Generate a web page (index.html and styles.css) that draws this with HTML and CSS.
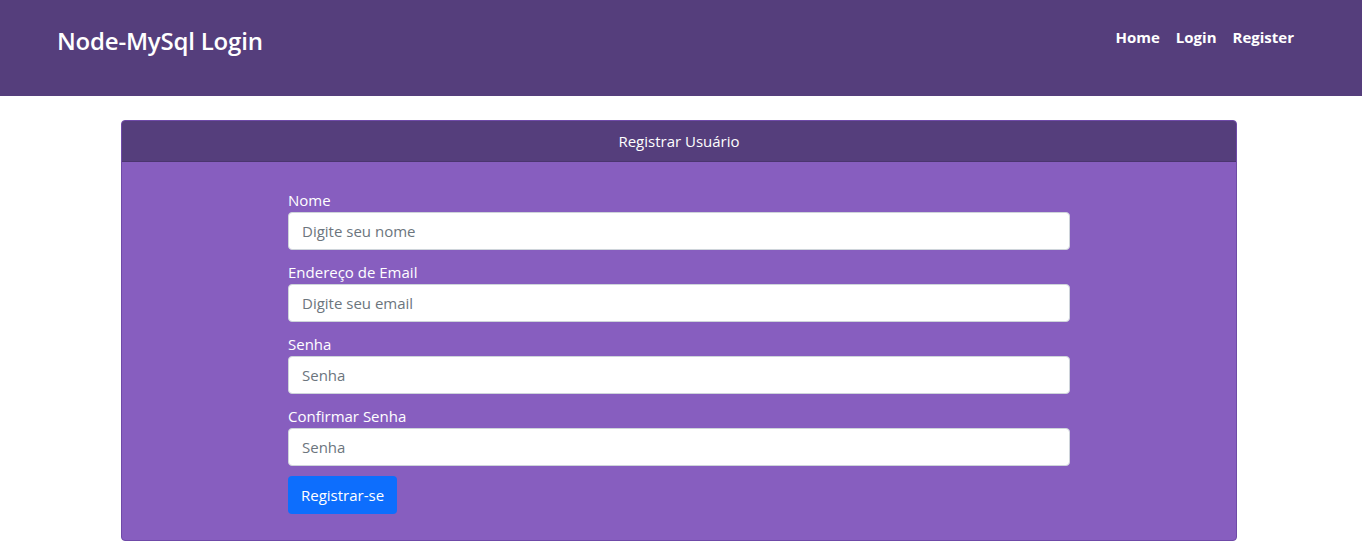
FILE: index.html
```html
<!DOCTYPE html>
<html lang="pt">
<head>
<meta charset="utf-8">
<title>Node-MySql Login</title>
<link rel="stylesheet" href="styles.css">
</head>
<body>
<nav class="navbar">
  <a class="brand" href="#">Node-MySql Login</a>
  <ul class="nav-links">
    <li><a href="#">Home</a></li>
    <li><a href="#">Login</a></li>
    <li><a href="#">Register</a></li>
  </ul>
</nav>
<main class="main">
  <section class="card">
    <div class="card-header">Registrar Usuário</div>
    <div class="card-body">
      <form class="form">
        <div class="group">
          <label for="name">Nome</label>
          <input id="name" type="text" placeholder="Digite seu nome">
        </div>
        <div class="group">
          <label for="email">Endereço de Email</label>
          <input id="email" type="email" placeholder="Digite seu email">
        </div>
        <div class="group">
          <label for="pw">Senha</label>
          <input id="pw" type="password" placeholder="Senha">
        </div>
        <div class="group">
          <label for="pw2">Confirmar Senha</label>
          <input id="pw2" type="password" placeholder="Senha">
        </div>
        <button type="button" class="btn">Registrar-se</button>
      </form>
    </div>
  </section>
</main>
</body>
</html>
```
FILE: styles.css
```css
* { box-sizing: border-box; }
html, body { margin: 0; padding: 0; }
body {
  font-family: "Open Sans", "Noto Sans", sans-serif;
  font-size: 16px;
  color: #212529;
  background: #fff;
}
.navbar {
  height: 96px;
  background: #553e7c;
  display: flex;
  align-items: flex-start;
  justify-content: space-between;
  padding: 0 68px 0 57px;
}
.brand {
  color: #fff;
  text-decoration: none;
  font-size: 24px;
  font-weight: 600;
  margin-top: 24px;
  letter-spacing: -0.2px;
}
.nav-links {
  list-style: none;
  display: flex;
  gap: 16px;
  margin: 26px 0 0;
  padding: 0;
}
.nav-links a {
  color: #fff;
  text-decoration: none;
  font-weight: 700;
  font-size: 15px;
}
.main {
  display: flex;
  justify-content: center;
  padding-top: 24px;
  padding-right: 4px;
}
.card {
  width: 1116px;
  border: 1px solid #6f4aa8;
  border-radius: 4px;
  overflow: hidden;
  background: #875ebf;
}
.card-header {
  background: #553e7c;
  color: #fff;
  text-align: center;
  height: 41px;
  line-height: 40px;
  font-size: 15px;
  border-bottom: 1px solid #4b356f;
}
.card-body {
  display: flex;
  justify-content: center;
  padding: 26px 0 26px;
}
.form {
  width: 782px;
  display: flex;
  flex-direction: column;
  align-items: flex-start;
}
.group {
  width: 100%;
  display: flex;
  flex-direction: column;
  margin-bottom: 10px;
}
label {
  color: #fff;
  font-size: 15px;
  line-height: 24px;
}
input {
  height: 38px;
  width: 100%;
  border: 1px solid #ced4da;
  border-radius: 4px;
  padding: 0 13px;
  font-family: inherit;
  font-size: 15px;
  color: #212529;
  background: #fff;
}
input::placeholder { color: #6c757d; }
.btn {
  height: 38px;
  padding: 0 13px;
  background: #0d6efd;
  color: #fff;
  border: none;
  border-radius: 4px;
  font-family: inherit;
  font-size: 15px;
}
```
